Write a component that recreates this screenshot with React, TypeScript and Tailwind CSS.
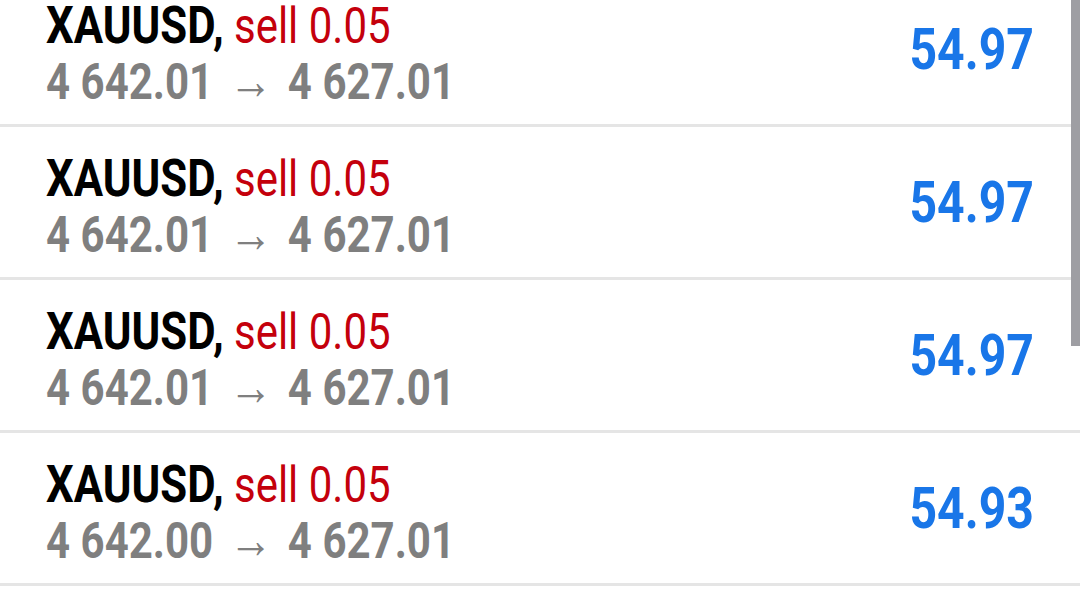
import React from 'react';

interface Deal {
  symbol: string;
  side: string;
  volume: string;
  open: string;
  close: string;
  profit: string;
}

const deals: Deal[] = [
  { symbol: 'XAUUSD', side: 'sell', volume: '0.05', open: '4 642.01', close: '4 627.01', profit: '54.97' },
  { symbol: 'XAUUSD', side: 'sell', volume: '0.05', open: '4 642.01', close: '4 627.01', profit: '54.97' },
  { symbol: 'XAUUSD', side: 'sell', volume: '0.05', open: '4 642.01', close: '4 627.01', profit: '54.97' },
  { symbol: 'XAUUSD', side: 'sell', volume: '0.05', open: '4 642.00', close: '4 627.01', profit: '54.93' },
];

function DealRow({ deal }: { deal: Deal }) {
  return (
    <div className="flex items-center justify-between h-[153px] border-b-[3px] border-[#e5e5e5] pl-[46px] pr-[46px]">
      <div className="mt-[10px] origin-left scale-x-[0.84] whitespace-nowrap">
        <div className="text-[52px] leading-[55px]">
          <span className="font-bold text-black">{deal.symbol},</span>
          <span className="ml-[12px] text-[50px] text-[#c4000c]">
            {deal.side} {deal.volume}
          </span>
        </div>
        <div className="text-[50px] leading-[55px] font-bold text-[#7f7f7f]">
          {deal.open} <span className="font-normal text-[52px] mx-[6px]">→</span> {deal.close}
        </div>
      </div>
      <div className="origin-right scale-x-[0.83] text-[58px] font-bold text-[#1976e8] leading-none">
        {deal.profit}
      </div>
    </div>
  );
}

export default function App() {
  return (
    <div className="relative w-[1080px] h-[608px] overflow-hidden bg-white font-['Roboto',sans-serif]">
      <div className="-mt-[26px]">
        {deals.map((d, i) => (
          <DealRow key={i} deal={d} />
        ))}
      </div>
      {/* scrollbar */}
      <div className="absolute right-0 top-0 w-[9px] h-[346px] bg-[#9e9ea3]" />
    </div>
  );
}
